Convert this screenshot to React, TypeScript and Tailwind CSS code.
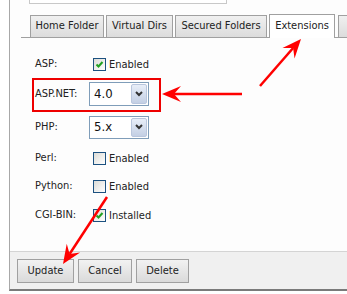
import React from 'react';

const font = { fontFamily: '"DejaVu Sans Condensed", "Liberation Sans", Tahoma, sans-serif' };

const tabs = [
  { label: 'Home Folder', cls: 'w-[74px] ml-[9px]' },
  { label: 'Virtual Dirs', cls: 'w-[67px] ml-[2px]' },
  { label: 'Secured Folders', cls: 'w-[92px] ml-[2px]' },
];

function Checkbox({ checked }: { checked?: boolean }) {
  return (
    <span className="relative inline-block w-[13px] h-[13px] border border-[#1c5180] bg-gradient-to-br from-[#dcdcd7] to-white">
      {checked && (
        <svg viewBox="0 0 11 11" className="absolute inset-0 w-[11px] h-[11px]">
          <path d="M2.5 5.5 L4.5 7.5 L8.5 3" fill="none" stroke="#21a121" strokeWidth="2" />
        </svg>
      )}
    </span>
  );
}

function Select({ value, h }: { value: string; h: string }) {
  return (
    <div className={`flex items-center justify-between w-[60px] ${h} border border-[#7f9db9] bg-white pl-[4px] pr-[1px]`}>
      <span className="text-[13px] text-[#111]">{value}</span>
      <span className="flex items-center justify-center w-[16px] h-[calc(100%-2px)] border border-[#b9c6dd] rounded-[2px] bg-gradient-to-b from-[#e8eef8] to-[#c3cfe4]">
        <svg viewBox="0 0 8 6" className="w-[8px] h-[6px]">
          <path d="M1 1 L4 4 L7 1" fill="none" stroke="#333" strokeWidth="2" />
        </svg>
      </span>
    </div>
  );
}

function Arrow({ x1, y1, x2, y2 }: { x1: number; y1: number; x2: number; y2: number }) {
  const len = Math.hypot(x2 - x1, y2 - y1);
  const dx = (x2 - x1) / len;
  const dy = (y2 - y1) / len;
  const nx = -dy;
  const ny = dx;
  const L = 19, W = 8, notch = 12;
  const pts = [
    [x2, y2],
    [x2 - L * dx + W * nx, y2 - L * dy + W * ny],
    [x2 - notch * dx, y2 - notch * dy],
    [x2 - L * dx - W * nx, y2 - L * dy - W * ny],
  ].map(p => p.join(',')).join(' ');
  return (
    <g>
      <line x1={x1} y1={y1} x2={x2 - notch * dx} y2={y2 - notch * dy} stroke="#f00" strokeWidth="2.5" />
      <polygon points={pts} fill="#f00" />
    </g>
  );
}

export default function App() {
  return (
    <div className="relative w-[347px] h-[294px] bg-white overflow-hidden text-[11px] text-[#222]" style={font}>
      <div className="ml-[9px] w-[420px] border-l border-b-2 border-l-[#a8a8a8] border-b-[#7a7a7a] bg-[#fdfdfd]">
        {/* top input edge */}
        <div className="h-[4px] w-[198px] ml-[19px] border-x border-b border-[#c8c8c8] bg-white" />

        {/* tabs */}
        <div className="mt-[10px] ml-[11px] flex items-end border-b border-[#a0a0a0]">
          {tabs.map(t => (
            <div key={t.label} className={`${t.cls} h-[22px] flex items-center justify-center border border-b-0 border-[#a0a0a0] bg-gradient-to-b from-[#f0f0f0] to-[#dcdcdc]`}>
              {t.label}
            </div>
          ))}
          <div className="w-[66px] ml-[2px] h-[24px] -mb-px flex items-center justify-center border border-b-0 border-[#a0a0a0] bg-white">
            Extensions
          </div>
          <div className="w-[60px] ml-[3px] h-[22px] border border-b-0 border-[#a0a0a0] bg-gradient-to-b from-[#f0f0f0] to-[#dcdcdc]" />
        </div>

        {/* content */}
        <div className="h-[213px] pl-[25px] pt-[14px] flex flex-col">
          <div className="h-[24px] flex items-center">
            <span className="w-[58px]">ASP:</span>
            <Checkbox checked />
            <span className="ml-[3px] mt-[3px]">Enabled</span>
          </div>
          <div className="mt-[6px] h-[24px] flex items-center">
            <span className="w-[54px]">ASP.NET:</span>
            <Select value="4.0" h="h-[24px]" />
          </div>
          <div className="mt-[9px] h-[24px] flex items-center">
            <span className="w-[54px]">PHP:</span>
            <Select value="5.x" h="h-[23px]" />
          </div>
          <div className="mt-[7px] h-[24px] flex items-center">
            <span className="w-[58px]">Perl:</span>
            <Checkbox />
            <span className="ml-[3px] mt-[3px]">Enabled</span>
          </div>
          <div className="mt-[4px] h-[24px] flex items-center">
            <span className="w-[58px]">Python:</span>
            <Checkbox />
            <span className="ml-[3px] mt-[3px]">Enabled</span>
          </div>
          <div className="mt-[5px] h-[24px] flex items-center">
            <span className="w-[58px]">CGI-BIN:</span>
            <Checkbox checked />
            <span className="ml-[3px] mt-[3px]">Installed</span>
          </div>
        </div>

        {/* footer */}
        <div className="h-[38px] border-t border-[#d4d4d4] bg-[#f0f0f0] pl-[7px] pt-[7px] flex items-start">
          <button className="w-[57px] h-[24px] border border-[#a0a0a0] bg-gradient-to-b from-[#f2f2f2] to-[#dadada]">Update</button>
          <button className="w-[54px] h-[24px] ml-[4px] border border-[#a0a0a0] bg-gradient-to-b from-[#f2f2f2] to-[#dadada]">Cancel</button>
          <button className="w-[53px] h-[24px] ml-[4px] border border-[#a0a0a0] bg-gradient-to-b from-[#f2f2f2] to-[#dadada]">Delete</button>
        </div>
      </div>

      {/* annotations */}
      <div className="absolute left-[32px] top-[78px] w-[129px] h-[34px] border-2 border-[#ee0000]" />
      <svg className="absolute inset-0 pointer-events-none" width="347" height="294">
        <Arrow x1={260} y1={86} x2={301} y2={39} />
        <Arrow x1={242} y1={94} x2={162} y2={94} />
        <Arrow x1={107} y1={197} x2={63} y2={264} />
      </svg>
    </div>
  );
}
